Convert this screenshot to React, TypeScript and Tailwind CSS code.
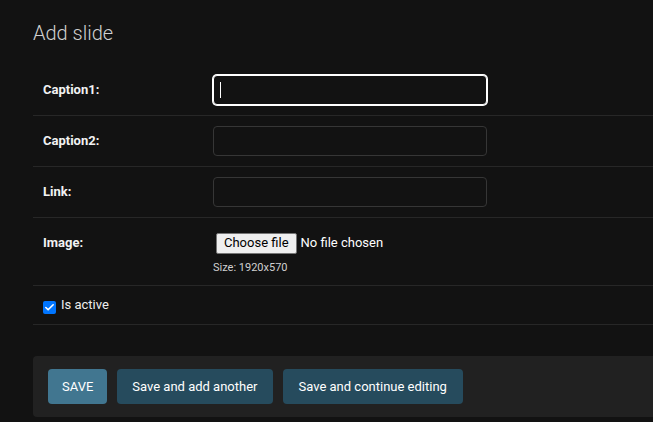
import { Check } from 'lucide-react'

const FONT = "font-['Roboto','Segoe_UI','Liberation_Sans',sans-serif]"

function Row({ label, children }: { label: string; children: React.ReactNode }) {
  return (
    <div className="flex items-start py-[10px] pl-[10px] border-b border-[#272727]">
      <div className="w-[170px] shrink-0 pt-[7px] text-[13px] font-bold leading-[16px] text-[#f2f2f2]">{label}</div>
      <div className="flex flex-col">{children}</div>
    </div>
  )
}

function TextField({ focused }: { focused?: boolean }) {
  return (
    <div
      className={`w-[274px] h-[30px] rounded-[4px] bg-[#121212] flex items-center px-[6px] border ${
        focused ? 'border-white ring-1 ring-white' : 'border-[#363636]'
      }`}
    >
      {focused && <span className="block w-px h-[16px] bg-white" />}
    </div>
  )
}

export default function App() {
  return (
    <div className={`min-h-[422px] w-full overflow-hidden bg-[#121212] ${FONT}`}>
      <div className="pl-[33px] pt-[21px]">
        <h1 className="text-[20px] leading-[24px] font-light text-[#d0d0d0] mb-[20px]">Add slide</h1>

        <div>
          <Row label="Caption1:">
            <TextField focused />
          </Row>
          <Row label="Caption2:">
            <TextField />
          </Row>
          <Row label="Link:">
            <TextField />
          </Row>
          <Row label="Image:">
            <div className="h-[30px] flex items-center pl-[3px]">
              <span className="h-[21px] px-[7px] flex items-center rounded-[2px] border border-[#767676] bg-[#efefef] text-[13px] text-black">
                Choose file
              </span>
              <span className="ml-[4px] text-[13px] text-white">No file chosen</span>
            </div>
            <div className="pt-[3px] text-[11px] leading-[14px] text-[#d0d0d0]">Size: 1920x570</div>
          </Row>
          <div className="flex items-center h-[39px] pl-[10px] border-b border-[#272727]">
            <span className="w-[13px] h-[13px] rounded-[2px] bg-[#0075ff] flex items-center justify-center mt-[4px]">
              <Check size={11} strokeWidth={3.5} className="text-white" />
            </span>
            <span className="ml-[5px] text-[13px] text-[#eeeeee]">Is active</span>
          </div>
        </div>

        <div className="mt-[31px] bg-[#212121] rounded-l-[4px] px-[15px] py-[13px] flex gap-[10px]">
          <button className="h-[35px] px-[14px] rounded-[4px] bg-[#417690] text-[13px] text-white">SAVE</button>
          <button className="h-[35px] px-[15px] rounded-[4px] bg-[#264b5d] text-[13px] text-white">Save and add another</button>
          <button className="h-[35px] px-[16px] rounded-[4px] bg-[#264b5d] text-[13px] text-white">
            Save and continue editing
          </button>
        </div>
      </div>
    </div>
  )
}
